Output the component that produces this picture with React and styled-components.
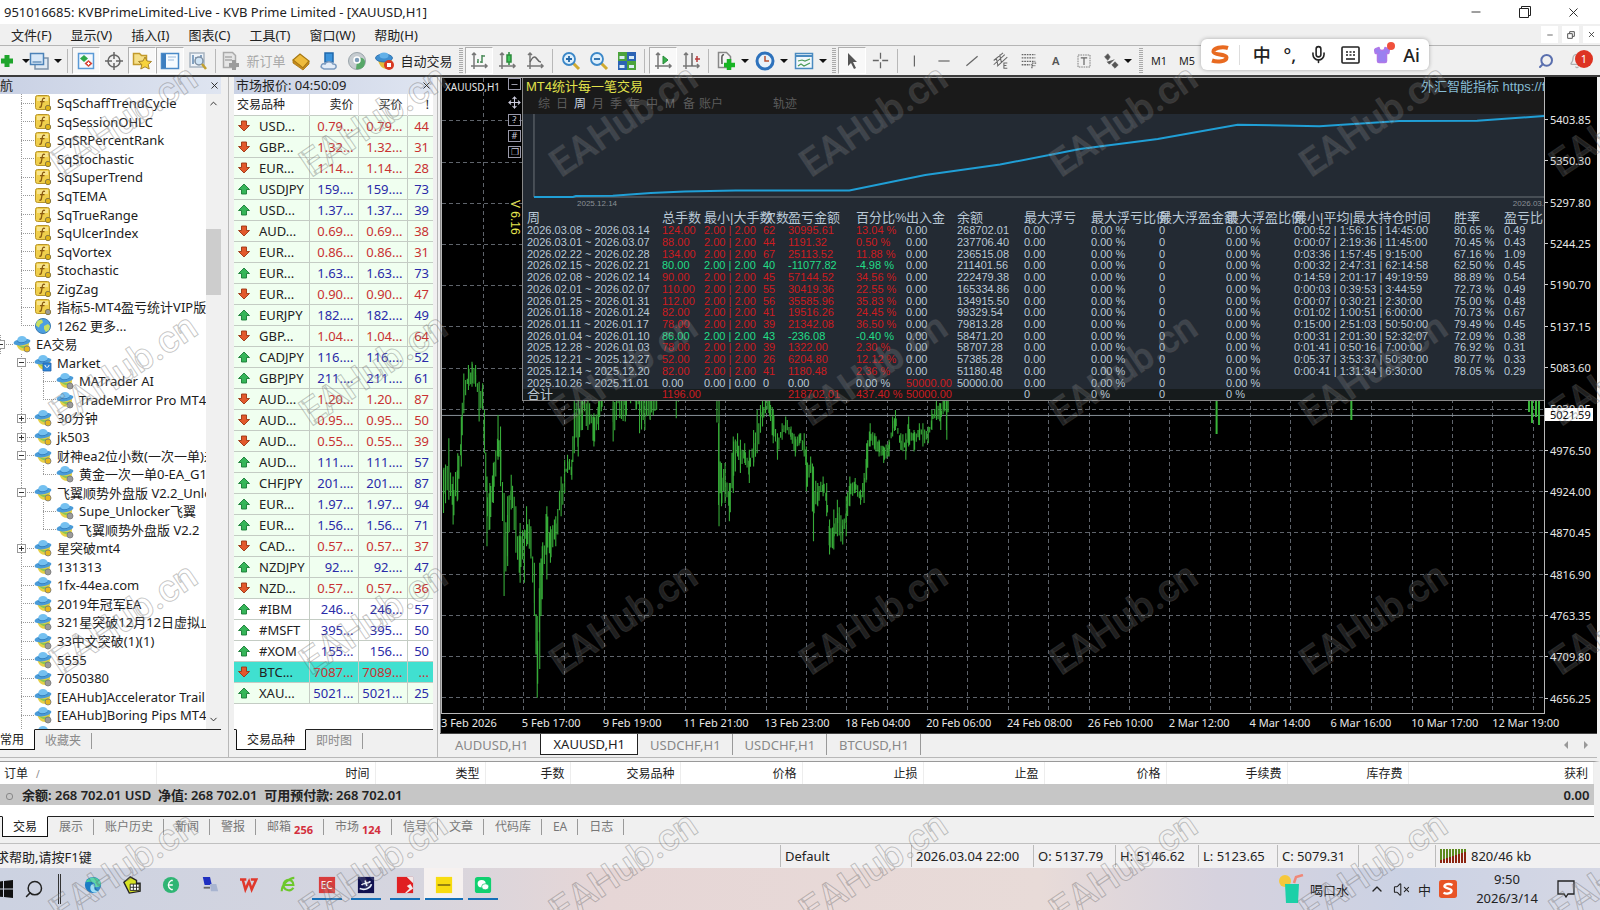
import React from "react";
import styled, { createGlobalStyle, css } from "styled-components";
import { Bell, Mic, Search, Minus, X, VolumeX, ChevronUp, ChevronDown, Shirt, Move } from "lucide-react";

const GlobalStyle = createGlobalStyle`
	* {
		box-sizing: border-box;
	}
	body {
		margin: 0;
		overflow: hidden;
		font-family: "Noto Sans", "Noto Sans CJK SC", sans-serif;
		font-size: 13px;
		color: #222;
		background: #f0f0f0;
	}
	button {
		margin: 0;
		padding: 0;
		border: 0;
		background: none;
		font: inherit;
		color: inherit;
		white-space: nowrap;
	}
	table {
		border-collapse: collapse;
	}
	svg {
		display: block;
		flex-shrink: 0;
	}
`;

/* ---------- data ---------- */

const menus = ["文件(F)", "显示(V)", "插入(I)", "图表(C)", "工具(T)", "窗口(W)", "帮助(H)"];

// [level, icon, label, expander, last child]
const tree = [
	[1, "fx", "SqSchaffTrendCycle"],
	[1, "fx", "SqSessionOHLC"],
	[1, "fx", "SqSRPercentRank"],
	[1, "fx", "SqStochastic"],
	[1, "fx", "SqSuperTrend"],
	[1, "fx", "SqTEMA"],
	[1, "fx", "SqTrueRange"],
	[1, "fx", "SqUlcerIndex"],
	[1, "fx", "SqVortex"],
	[1, "fx", "Stochastic"],
	[1, "fx", "ZigZag"],
	[1, "fxGray", "指标5-MT4盈亏统计VIP版"],
	[1, "globe", "1262 更多...", "", true],
	[0, "ea", "EA交易", "-"],
	[1, "market", "Market", "-"],
	[2, "eaGray", "MATrader AI"],
	[2, "eaGray", "TradeMirror Pro MT4", "", true],
	[1, "ea", "30分钟", "+"],
	[1, "ea", "jk503", "+"],
	[1, "ea", "财神ea2位小数(一次一单)未", "-"],
	[2, "eaGray", "黄金一次一单0-EA_G1", "", true],
	[1, "ea", "飞翼顺势外盘版 V2.2_Unlocker", "-"],
	[2, "eaGray", "Supe_Unlocker飞翼"],
	[2, "eaGray", "飞翼顺势外盘版 V2.2", "", true],
	[1, "ea", "星突破mt4", "+"],
	[1, "eaGray", "131313"],
	[1, "ea", "1fx-44ea.com"],
	[1, "ea", "2019年冠军EA"],
	[1, "eaGray", "321星突破12月12日虚拟止损"],
	[1, "eaGray", "33中文突破(1)(1)"],
	[1, "eaGray", "5555"],
	[1, "eaGray", "7050380"],
	[1, "ea", "[EAHub]Accelerator Trail"],
	[1, "eaGray", "[EAHub]Boring Pips MT4"],
	[1, "ea", "[EAHub]Breakthrough"],
];

// symbol, bid, ask, spread, direction, background
const quotes = [
	["USD...", "0.79...", "0.79...", "44", 0],
	["GBP...", "1.32...", "1.32...", "31", 0],
	["EUR...", "1.14...", "1.14...", "28", 0],
	["USDJPY", "159....", "159....", "73", 1],
	["USD...", "1.37...", "1.37...", "39", 1],
	["AUD...", "0.69...", "0.69...", "38", 0],
	["EUR...", "0.86...", "0.86...", "31", 0],
	["EUR...", "1.63...", "1.63...", "73", 1],
	["EUR...", "0.90...", "0.90...", "47", 0],
	["EURJPY", "182....", "182....", "49", 1],
	["GBP...", "1.04...", "1.04...", "64", 0],
	["CADJPY", "116....", "116....", "52", 1],
	["GBPJPY", "211....", "211....", "61", 1],
	["AUD...", "1.20...", "1.20...", "87", 0],
	["AUD...", "0.95...", "0.95...", "50", 0],
	["AUD...", "0.55...", "0.55...", "39", 0],
	["AUD...", "111....", "111....", "57", 1],
	["CHFJPY", "201....", "201....", "87", 1],
	["EUR...", "1.97...", "1.97...", "94", 1],
	["EUR...", "1.56...", "1.56...", "71", 1],
	["CAD...", "0.57...", "0.57...", "37", 0],
	["NZDJPY", "92....", "92....", "47", 1],
	["NZD...", "0.57...", "0.57...", "36", 0],
	["#IBM", "246...", "246...", "57", 1, "#ffffff"],
	["#MSFT", "395...", "395...", "50", 1, "#ffffff"],
	["#XOM", "155...", "156...", "50", 1, "#ffffff"],
	["BTC...", "7087...", "7089...", "...", 0, "#40e0d0"],
	["XAU...", "5021...", "5021...", "25", 1],
];

const prices = [
	"5403.85", "5350.30", "5297.80", "5244.25", "5190.70", "5137.15", "5083.60", "5030.05",
	"4976.50", "4924.00", "4870.45", "4816.90", "4763.35", "4709.80", "4656.25",
];

const dates = [
	"3 Feb 2026", "5 Feb 17:00", "9 Feb 19:00", "11 Feb 21:00", "13 Feb 23:00", "18 Feb 04:00", "20 Feb 06:00",
	"24 Feb 08:00", "26 Feb 10:00", "2 Mar 12:00", "4 Mar 14:00", "6 Mar 16:00", "10 Mar 17:00", "12 Mar 19:00",
];

const statCols = [
	["周", 139], ["总手数", 42], ["最小|大手数", 59], ["次数", 25], ["盈亏金额", 68], ["百分比%", 50],
	["出入金", 51], ["余额", 67], ["最大浮亏", 67], ["最大浮亏比例", 68], ["最大浮盈金额", 67],
	["最大浮盈比例", 68], ["最小|平均|最大持仓时间", 160], ["胜率", 50], ["盈亏比", 41],
];

const stats = [
	["2026.03.08 ~ 2026.03.14", "124.00", "62", "30995.61", "13.04 %", "268702.01", "0:00:52 | 1:56:15 | 14:45:00", "80.65 %", "0.49"],
	["2026.03.01 ~ 2026.03.07", "88.00", "44", "1191.32", "0.50 %", "237706.40", "0:00:07 | 2:19:36 | 11:45:00", "70.45 %", "0.43"],
	["2026.02.22 ~ 2026.02.28", "134.00", "67", "25113.52", "11.88 %", "236515.08", "0:03:36 | 1:57:45 | 9:15:00", "67.16 %", "1.09"],
	["2026.02.15 ~ 2026.02.21", "80.00", "40", "-11077.82", "-4.98 %", "211401.56", "0:00:32 | 2:47:31 | 62:14:58", "62.50 %", "0.45"],
	["2026.02.08 ~ 2026.02.14", "90.00", "45", "57144.52", "34.56 %", "222479.38", "0:14:59 | 2:01:17 | 49:19:59", "88.89 %", "0.54"],
	["2026.02.01 ~ 2026.02.07", "110.00", "55", "30419.36", "22.55 %", "165334.86", "0:00:03 | 0:39:53 | 3:44:59", "72.73 %", "0.49"],
	["2026.01.25 ~ 2026.01.31", "112.00", "56", "35585.96", "35.83 %", "134915.50", "0:00:07 | 0:30:21 | 2:30:00", "75.00 %", "0.48"],
	["2026.01.18 ~ 2026.01.24", "82.00", "41", "19516.26", "24.45 %", "99329.54", "0:01:02 | 1:00:51 | 6:00:00", "70.73 %", "0.67"],
	["2026.01.11 ~ 2026.01.17", "78.00", "39", "21342.08", "36.50 %", "79813.28", "0:15:00 | 2:51:03 | 50:50:00", "79.49 %", "0.45"],
	["2026.01.04 ~ 2026.01.10", "86.00", "43", "-236.08", "-0.40 %", "58471.20", "0:00:31 | 2:01:30 | 52:32:07", "72.09 %", "0.38"],
	["2025.12.28 ~ 2026.01.03", "78.00", "39", "1322.00", "2.30 %", "58707.28", "0:01:41 | 0:50:16 | 7:00:00", "76.92 %", "0.31"],
	["2025.12.21 ~ 2025.12.27", "52.00", "26", "6204.80", "12.12 %", "57385.28", "0:05:37 | 3:53:37 | 50:30:00", "80.77 %", "0.33"],
	["2025.12.14 ~ 2025.12.20", "82.00", "41", "1180.48", "2.36 %", "51180.48", "0:00:41 | 1:31:34 | 6:30:00", "78.05 %", "0.29"],
];

// [x, high, low] turning points of the price envelope
const swings = [
	[35, 360, 490], [50, 265, 450], [62, 380, 525], [75, 310, 450], [85, 200, 350], [92, 70, 190], [105, 45, 120],
	[115, 35, 110], [125, 45, 110], [135, 95, 215], [145, 100, 180], [150, 180, 310], [157, 380, 590], [165, 400, 540],
	[175, 340, 460], [188, 195, 330], [195, 230, 410], [205, 430, 740], [215, 440, 650], [225, 375, 480], [238, 470, 610],
	[250, 520, 700], [262, 540, 700], [268, 470, 590], [280, 530, 620], [290, 640, 800], [298, 800, 1046], [305, 640, 960],
	[312, 590, 750], [325, 470, 690], [335, 530, 640], [350, 500, 590], [365, 380, 500], [375, 330, 430], [383, 315, 370],
	[395, 330, 390], [402, 130, 310], [413, 130, 320], [425, 90, 240], [440, 110, 240], [457, 190, 290], [470, 140, 240],
	[480, 60, 170], [505, 60, 140], [511, 100, 275], [520, 80, 210], [545, 100, 215], [560, 60, 160], [575, 60, 180], [585, 100, 250],
	[600, 130, 240], [615, 100, 210], [633, 60, 180], [640, 40, 100], [680, 40, 100], [688, 100, 205], [695, 80, 150],
	[702, 20, 90], [800, 20, 120], [808, 140, 530], [815, 340, 470], [825, 340, 460], [837, 400, 515], [848, 260, 430],
	[860, 250, 320], [868, 270, 370], [880, 280, 340], [893, 300, 400], [905, 240, 350], [915, 180, 310], [930, 150, 230],
	[938, 130, 190], [950, 140, 200], [960, 180, 280], [972, 250, 330], [985, 220, 270], [995, 200, 250], [1010, 230, 270],
	[1022, 260, 320], [1035, 250, 280], [1047, 250, 320], [1053, 290, 425], [1065, 320, 370], [1073, 350, 575],
	[1085, 400, 470], [1100, 380, 440], [1110, 400, 500], [1118, 510, 615], [1130, 480, 600], [1140, 450, 560],
	[1155, 510, 585], [1165, 440, 560], [1175, 380, 470], [1190, 385, 430], [1205, 420, 465], [1215, 370, 460],
	[1222, 280, 390], [1232, 220, 290], [1245, 250, 300], [1257, 270, 320], [1270, 290, 340], [1285, 270, 320],
	[1295, 200, 260], [1303, 180, 240], [1318, 250, 300], [1332, 250, 330], [1340, 200, 290], [1355, 240, 305],
	[1370, 220, 270], [1380, 220, 290], [1395, 230, 280], [1405, 180, 240], [1418, 150, 210], [1430, 160, 240],
	[1440, 140, 180], [1447, 120, 270], [1454, 60, 150],
];

function priceBars() {
	let d = "";
	let seed = 7;
	let i = 0;
	const rnd = () => {
		seed = (seed * 16807) % 2147483647;
		return seed / 2147483647;
	};
	for (let x = 36; x < 1454; x += 4.7) {
		while (swings[i + 1][0] < x) i++;
		const a = swings[i];
		const b = swings[i + 1];
		const t = (x - a[0]) / (b[0] - a[0]);
		const hi = a[1] + (b[1] - a[1]) * t;
		const lo = a[2] + (b[2] - a[2]) * t;
		const span = lo - hi;
		d += `M${x.toFixed(1)} ${(hi + span * rnd() * 0.45).toFixed(0)}V${(lo - span * rnd() * 0.45).toFixed(0)}`;
	}
	// the extremes themselves are always drawn full height
	swings.forEach(([x, hi, lo]) => {
		d += `M${x} ${hi}V${lo}`;
	});
	return d;
}
const BARS = priceBars();

const terminalCols = [
	["订单", 156], ["时间", 219], ["类型", 110], ["手数", 85], ["交易品种", 110], ["价格", 122], ["止损", 121],
	["止盈", 121], ["价格", 122], ["手续费", 121], ["库存费", 121], ["获利", 0],
];

const terminalTabs = [
	["交易"], ["展示"], ["账户历史"], ["新闻"], ["警报"], ["邮箱", "256"], ["市场", "124"], ["信号"], ["文章"],
	["代码库"], ["EA"], ["日志"],
];

/* ---------- small drawings ---------- */

const HatIcon = ({ dot = "#e8b820", box }) => (
	<svg width="18" height="18" viewBox="0 0 18 18">
		<path d="M3 8c1 5 4 8 8 8 4 0 5-4 5-8z" fill="#e6d048" />
		<path d="M4 9c2 2 6 3 11 1l-2 3c-3 1-7-1-9-4z" fill="#8cc850" />
		<ellipse cx="9" cy="7" rx="8.5" ry="3.2" fill="#4a9bd8" transform="rotate(-8 9 7)" />
		<ellipse cx="9" cy="4.6" rx="4.6" ry="3.6" fill="#74c0f0" />
		<path d="M4.5 6.500c3 2 6 1.600 9-.4" stroke="#2c78b8" fill="none" />
		{box ? (
			<path d="M9 9h8v8H9z" fill="#2f86d8" stroke="#1f5fa8" strokeWidth=".8" />
		) : (
			<circle cx="14" cy="14" r="3" fill={dot} stroke="#777" strokeWidth=".8" />
		)}
		{box && <path d="M11 11c0 3 4 3 4 0" stroke="#fff" fill="none" />}
	</svg>
);

const FxIcon = ({ dot = "#e0b418" }) => (
	<svg width="18" height="18" viewBox="0 0 18 18">
		<rect x="1.5" y="1.5" width="14" height="14" rx="2" fill="#f0cf4c" stroke="#b8952a" />
		<path d="M3 3h11v4H3z" fill="#f8e48c" />
		<path d="M11 4.5c-2-.8-2.500.5-2.700 2L7.300 12c-.3 1.200-1 1.500-2 1M6 7.700h4.500" stroke="#8a5a10" strokeWidth="1.3" fill="none" />
		<circle cx="14" cy="14" r="2.7" fill={dot} stroke="#8a7a40" />
	</svg>
);

const GlobeIcon = () => (
	<svg width="18" height="18" viewBox="0 0 18 18">
		<circle cx="9" cy="9" r="7.5" fill="#4c9fe0" stroke="#3a7ab0" />
		<path d="M4 3.5l4-1 1 3-3 2-1 3-3-2c0-2 .5-4 2-5zM10 9l4-2 2 2-1 4-3 2-2-3z" fill="#c8e060" />
	</svg>
);

const NODE_ICONS = {
	fx: <FxIcon />,
	fxGray: <FxIcon dot="#999" />,
	globe: <GlobeIcon />,
	ea: <HatIcon />,
	eaGray: <HatIcon dot="#9a9a9a" />,
	market: <HatIcon box />,
};

const ArrowIcon = ({ up }) => (
	<svg width="12" height="12" viewBox="0 0 12 12">
		<path
			d="M6 1l5.500 5.500H8.500V11h-5V6.500H.5z"
			fill={up ? "#35b558" : "#e2592c"}
			stroke={up ? "#187a35" : "#9c3412"}
			strokeWidth=".9"
			strokeLinejoin="round"
			transform={up ? undefined : "rotate(180 6 6)"}
		/>
	</svg>
);

const Glyph = ({ children, size = 20 }) => (
	<svg width={size} height={size} viewBox="0 0 20 20" fill="none" stroke="#666" strokeWidth="1.5">
		{children}
	</svg>
);

const axes = <path d="M5 2v16M2 15h16M3 4l2-2 2 2M16 13l2 2-2 2" stroke="#777" />;

const ICONS = {
	add: <path d="M10 4v12M4 10h12" stroke="#1fa52c" strokeWidth="5" />,
	windows: (
		<>
			<path d="M6 7h13v11H6z" fill="#dfe9f3" stroke="#7d93aa" />
			<path d="M1.500 2.500h13v11h-13z" fill="#d8e8f8" stroke="#4c82b8" />
			<path d="M3.500 11h9" stroke="#6a94be" />
		</>
	),
	market: (
		<>
			<path d="M2.500 2.500h15v15h-15z" fill="#f3f9ff" stroke="#5b9ad6" />
			<path d="M8 4l4 3.500-4 3.500-4-3.500z" fill="#2ea84a" stroke="none" />
			<path d="M12.500 9l4 3.500-4 3.500-4-3.500z" fill="#d84a3a" stroke="none" />
			<path d="M12.500 11v3M11 12.500h3" stroke="#fff" strokeWidth="1" />
		</>
	),
	cross: (
		<>
			<circle cx="10" cy="10" r="6" />
			<path d="M10 1v7M10 12v7M1 10h7M12 10h7" />
		</>
	),
	star: (
		<>
			<path d="M1.500 2.500h6l2 2h5v9h-13z" fill="#f5df88" stroke="#c29a2c" />
			<path d="M13 6l2 4 4.500.5-3.300 3 1 4.500-4.200-2.200L8.800 18l1-4.500-3.300-3L11 10z" fill="#f7d33c" stroke="#a8842a" strokeWidth="1" />
		</>
	),
	terminal: (
		<>
			<path d="M1.500 2.500h17v15h-17z" fill="#f6fbff" stroke="#4a8ac8" />
			<path d="M2 3h4v14H2z" fill="#3d7fc0" stroke="none" />
			<path d="M8 6h8M8 9h6" stroke="#b8d0e8" />
		</>
	),
	tester: (
		<>
			<path d="M2 2h14v14H2z" fill="#eef3f8" stroke="#a8b4c0" />
			<path d="M5 4v9M8 6v5M13 4v3" stroke="#6088b0" />
			<circle cx="11" cy="10" r="4" fill="#cfe4f5" stroke="#7d8fa2" />
			<path d="M14 13l4 5" stroke="#c2a030" strokeWidth="2.5" />
		</>
	),
	order: (
		<>
			<path d="M2.500 1.500h9l3 3v12h-12z" fill="#e6e6e6" stroke="#aaa" />
			<path d="M4 6h7M4 9h7" stroke="#aaa" />
			<path d="M13 9v10M8 14h10" stroke="#9c9c9c" strokeWidth="4" />
		</>
	),
	book: (
		<>
			<path d="M2 9l7-6 9 7-6 7z" fill="#eebb3c" stroke="#a67812" strokeWidth="1.2" />
			<path d="M2 9v3l10 7 6-6v-3l-6 7z" fill="#c88a1c" stroke="#a67812" strokeWidth=".8" />
		</>
	),
	person: (
		<>
			<path d="M6 2h8v9H6z" fill="#3c94dc" stroke="#1f68ac" />
			<path d="M3 17c-2-2 0-5 3-4 1-3 7-3 8 0 4 0 4 4 1 5H5z" fill="#e4edf8" stroke="#7d9cc0" />
		</>
	),
	signal: (
		<>
			<circle cx="10" cy="10" r="8.500" fill="#c6ccd0" stroke="#9aa4aa" strokeWidth="1" />
			<path d="M10 10l-1 8c5 1 9-2 9-7 0-3-3-5-6-4z" fill="#58a868" stroke="none" />
			<circle cx="10" cy="9" r="3" fill="#7d9cb8" stroke="#fff" />
		</>
	),
	auto: (
		<>
			<path d="M3 9c1 5 4 9 9 9l5-9z" fill="#e3bc38" stroke="none" />
			<ellipse cx="9" cy="7" rx="8.500" ry="4" fill="#3f8fd0" stroke="#1f66a8" strokeWidth=".8" />
			<ellipse cx="9" cy="4.500" rx="4.500" ry="3" fill="#62b0e8" stroke="none" />
			<circle cx="14" cy="14" r="5" fill="#d83a22" stroke="none" />
			<path d="M12 12h4v4h-4z" fill="#fff" stroke="none" />
		</>
	),
	bars: <>{axes}<path d="M9 12V8M9 11h-1M13 4v8M11 11h2M13 5h3" stroke="#4a8a58" /></>,
	candles: <>{axes}<path d="M12 1v13" stroke="#2b8a3b" /><path d="M10 4h4v7h-4z" fill="#3cc858" stroke="#2b8a3b" /></>,
	line: <>{axes}<path d="M5 11c3-6 5-6 7-3s3 3 4 3" /></>,
	zoomIn: (
		<>
			<path d="M12 12l6 6" stroke="#d0aa30" strokeWidth="3" />
			<circle cx="8" cy="8" r="6" fill="#dff0fc" stroke="#3c88c8" strokeWidth="1.8" />
			<path d="M8 5v6M5 8h6" stroke="#2468a8" strokeWidth="1.8" />
		</>
	),
	zoomOut: (
		<>
			<path d="M12 12l6 6" stroke="#d0aa30" strokeWidth="3" />
			<circle cx="8" cy="8" r="6" fill="#dff0fc" stroke="#3c88c8" strokeWidth="1.8" />
			<path d="M5 8h6" stroke="#2468a8" strokeWidth="1.8" />
		</>
	),
	tiles: (
		<>
			<path d="M1 1h9v9H1zM10 10h9v9h-9z" fill="#4ba33c" stroke="none" />
			<path d="M10 1h9v9h-9zM1 10h9v9H1z" fill="#2b63b4" stroke="none" />
			<path d="M2.500 5h5v3h-5zM12 5h5v3h-5zM2.500 14h5v3h-5zM12 14h5v3h-5z" fill="#d9edf5" stroke="none" />
		</>
	),
	scroll: <>{axes}<path d="M10 5l5 4-5 4z" fill="#36b04a" stroke="#2b8a3b" strokeWidth="1" /></>,
	shift: <>{axes}<path d="M11 2v13" /><path d="M19 8h-5M16 5v6" stroke="#b83a3a" /></>,
	indicator: (
		<>
			<path d="M2.500 1.500h8l4 4v11h-12z" fill="#f4f4f4" stroke="#888" />
			<path d="M8 4c-3-1-2 4-2 9" stroke="#555" />
			<path d="M13 8v11M8 14h11" stroke="#18b424" strokeWidth="4.5" />
		</>
	),
	clock: (
		<>
			<circle cx="10" cy="10" r="8" fill="#e8f2fa" stroke="#2e72bc" strokeWidth="3" />
			<path d="M10 5v5h4" stroke="#b85030" />
		</>
	),
	template: (
		<>
			<path d="M1.500 2.500h17v15h-17z" fill="#f2f8fc" stroke="#4a8ac0" />
			<path d="M2 5h16" stroke="#4a8ac0" strokeWidth="2" />
			<path d="M4 10l4-1 3 1 5-2M4 15l3-2 3 2 6-3" stroke="#4a9a58" strokeWidth="1.2" />
		</>
	),
	cursor: <path d="M6 2v13l3-3 3 6 2-1-3-6h4z" fill="#555" stroke="none" />,
	crosshair: <path d="M10 1v7M10 12v7M1 10h7M12 10h7" />,
	vline: <path d="M8 3v14" />,
	hline: <path d="M3 10h14" />,
	trend: <path d="M3 16L17 4" />,
	channel: <path d="M2 15L15 3M2 10l11-9M6 17L18 6M5 7l2 9M9 3l2 9M18 13h-4v6h4M14 16h3" strokeWidth="1.2" />,
	fibo: <path d="M2 3h16M2 7h16M2 11h16M2 15h10M14 19v-6h5M14 16h4" strokeDasharray="2 1" />,
	textA: <text x="5" y="15" fontSize="14" fill="#555" stroke="none" fontWeight="600">A</text>,
	label: (
		<>
			<path d="M2.500 2.500h15v15h-15z" strokeDasharray="2 1" strokeWidth="1" />
			<path d="M6 6h8M10 6v9" />
		</>
	),
	shapes: <path d="M2 5l4-4 3 4-3 4zM11 15l4-4 4 4-4 4zM5 11l3 3 6-6" fill="#555" strokeWidth="1" />,
};

/* ---------- styled parts ---------- */

const Desktop = styled.div`
	position: relative;
	display: flex;
	flex-direction: column;
	min-height: 100vh;
	overflow: hidden;
`;

const TitleBar = styled.header`
	display: flex;
	align-items: center;
	justify-content: space-between;
	height: 24px;
	padding: 0 18px 0 4px;
	background: #fff;
	h1 {
		margin: 0;
		font-size: 13px;
		font-weight: 400;
	}
`;

const WindowButtons = styled.div`
	display: flex;
	align-items: center;
	gap: ${(p) => (p.$small ? "4px" : "32px")};
	button {
		display: grid;
		place-items: center;
		width: 17px;
		height: 17px;
		background: #fff;
	}
`;

const MenuBar = styled.nav`
	display: flex;
	align-items: center;
	justify-content: space-between;
	height: 22px;
	padding-left: 11px;
	border-bottom: 1px solid #b5b5b5;
	background: #f0f0f0;
	ul {
		display: flex;
		gap: 19px;
		margin: 0;
		padding: 0;
		list-style: none;
	}
`;

const Toolbar = styled.div`
	display: flex;
	align-items: center;
	height: 31px;
	border-bottom: 2px solid #3c3c3c;
	background: #f0f0f0;
`;

const Tool = styled.button`
	display: flex;
	align-items: center;
	justify-content: center;
	flex-shrink: 0;
	gap: 5px;
	width: ${(p) => p.$w || 28}px;
	height: 27px;
	color: ${(p) => (p.$muted ? "#a8a8a8" : "#222")};
	${(p) =>
		p.$pressed &&
		css`
			border: 1px solid #b0b0b0;
			border-right-color: #fff;
			border-bottom-color: #fff;
			background: #f8f8f8;
		`}
`;

const Caret = styled.span`
	border: 4px solid transparent;
	border-top-color: #111;
	border-bottom: 0;
`;

const Sep = styled.span`
	flex-shrink: 0;
	width: 1px;
	height: 24px;
	margin: 0 4px 0 3px;
	background: #b8b8b8;
`;

const Grip = styled.span`
	flex-shrink: 0;
	width: 4px;
	height: 26px;
	margin: 0 2px;
	background: repeating-linear-gradient(#aaa 0 1px, #f0f0f0 1px 2px);
`;

const ToolEnd = styled.div`
	display: flex;
	align-items: center;
	gap: 15px;
	margin-left: auto;
	padding-right: 7px;
`;

// magnifier with its handle at the lower left
const Magnifier = styled(Search)`
	transform: scaleX(-1);
`;

const Alerts = styled.button`
	display: flex;
	align-items: center;
	svg {
		margin-right: -10px;
	}
	span {
		z-index: 1;
		display: grid;
		place-items: center;
		width: 18px;
		height: 18px;
		margin-bottom: 4px;
		border-radius: 50%;
		background: #dd3322;
		color: #fff;
		font-size: 11px;
	}
`;

const Workspace = styled.main`
	display: flex;
	flex: 1;
	min-height: 0;
	padding-right: 3px;
`;

const Panel = styled.section`
	display: flex;
	flex-direction: column;
	flex-shrink: 0;
	width: ${(p) => p.$w}px;
	padding: 0 ${(p) => p.$pr}px 7px ${(p) => p.$pl || 0}px;
	border-right: 1px solid #b8b8b8;
	border-bottom: 1px solid #b8b8b8;
`;

const PanelHead = styled.header`
	display: flex;
	align-items: center;
	justify-content: space-between;
	height: 17px;
	padding: 0 1px 0 ${(p) => p.$pl}px;
	background: linear-gradient(90deg, #c9d1e4, #dfe5f1);
	h2 {
		margin: 0;
		font-size: 13px;
		font-weight: 400;
		line-height: 17px;
	}
`;

const TreeWrap = styled.div`
	display: flex;
	flex: 1 1 0;
	min-height: 0;
	overflow: hidden;
	background: #fff;
`;

const Tree = styled.ul`
	display: grid;
	grid-auto-rows: 1fr;
	flex: 1;
	min-width: 0;
	margin: 0 0 -14px;
	padding: 0;
	list-style: none;
	overflow: hidden;
`;

const Node = styled.li`
	display: flex;
	align-items: center;
	min-height: 0;
	padding-left: ${(p) => (p.$level ? 21 : 0)}px;
	line-height: 18px;
	white-space: nowrap;
	color: #1c1c1c;
	span {
		padding-left: 5px;
	}
`;

const Trunk = styled.i`
	align-self: stretch;
	width: 22px;
	border-left: 1px dotted #999;
`;

const Branch = styled.i`
	display: flex;
	align-items: center;
	align-self: stretch;
	flex-shrink: 0;
	width: 13px;
	background:
		repeating-linear-gradient(90deg, #999 0 1px, transparent 1px 2px) 0 50% / 100% 1px no-repeat,
		repeating-linear-gradient(#999 0 1px, transparent 1px 2px) 0 0 / 1px ${(p) => (p.$end ? "50%" : "100%")} no-repeat;
`;

const Expander = styled.button`
	width: 9px;
	height: 9px;
	margin-left: -4px;
	border: 1px solid #999;
	background:
		linear-gradient(#333, #333) 50% 50% / 5px 1px no-repeat,
		linear-gradient(#333, #333) 50% 50% / 1px ${(p) => (p.$open ? 0 : 5)}px no-repeat,
		#fff;
`;

const ScrollTrack = styled.div`
	display: flex;
	flex-direction: column;
	align-items: center;
	width: 15px;
	padding: 4px 0;
	background: #f0f0f0;
	&::before {
		content: "";
		order: 1;
		width: 15px;
		height: 66px;
		margin: 120px 0 auto;
		background: #cdcdcd;
	}
	svg:last-child {
		order: 2;
	}
`;

const PanelTabs = styled.div`
	display: flex;
	height: 21px;
	border-top: 1px solid #222;
	padding-left: ${(p) => p.$pl || 0}px;
	color: #8a8a8a;
	button {
		display: flex;
		align-items: center;
		padding: 0 10px;
		font-size: 12px;
		line-height: 18px;
	}
	button + button {
		height: 16px;
		margin-top: 3px;
		border-right: 1px solid #999;
	}
	button:first-child {
		margin-top: -1px;
		padding-left: ${(p) => (p.$pl ? 10 : 0)}px;
		border: 1px solid #111;
		border-left-width: ${(p) => (p.$pl ? 1 : 0)}px;
		border-top-color: #fff;
		background: #fff;
		color: #222;
	}
`;

const QuoteArea = styled.div`
	flex: 1 1 0;
	min-height: 0;
	overflow: hidden;
	background: #fff;
`;

const QuoteTable = styled.table`
	width: 100%;
	table-layout: fixed;
	th {
		height: 21px;
		padding: 0 4px 0 3px;
		font-weight: 400;
		font-size: 12px;
		text-align: right;
		border-right: 1px solid #e0e0e0;
	}
	th:first-child {
		text-align: left;
	}
	td {
		height: 21px;
		padding: 0 4px 0 0;
		border: 1px solid #c4ccc4;
		border-left: 0;
		line-height: 18px;
		text-align: right;
		white-space: nowrap;
		overflow: hidden;
	}
	th:last-child,
	td:last-child {
		border-right: 0;
	}
`;

const QuoteRow = styled.tr`
	background: ${(p) => p.$bg || "#f0fff0"};
	color: ${(p) => (p.$up ? "#2a2aa8" : "#c83232")};
`;

const Symbol = styled.div`
	display: flex;
	align-items: center;
	gap: 9px;
	padding-left: 4px;
	color: #222;
`;

const ChartColumn = styled.section`
	display: flex;
	flex: 1;
	flex-direction: column;
	min-width: 0;
	padding-left: 2px;
	border-bottom: 1px solid #b8b8b8;
`;

const ChartWindow = styled.div`
	display: grid;
	grid-template: minmax(0, 1fr) 19px / minmax(0, 1fr) 52px;
	flex: 1;
	min-height: 0;
	border-left: 1px solid #888;
	background: #000;
	color: #e8e8e8;
	font-size: 11px;
`;

const Plot = styled.div`
	position: relative;
	min-height: 0;
	border: 1px solid #b8b8b8;
	> svg {
		position: absolute;
		inset: 0;
		width: 100%;
		height: 100%;
	}
`;

const PlotTitle = styled.h3`
	position: absolute;
	top: 2px;
	left: 3px;
	margin: 0;
	font-size: 10px;
	font-weight: 400;
`;

const PlotButtons = styled.div`
	position: absolute;
	top: 0;
	left: 66px;
	display: flex;
	flex-direction: column;
	gap: 4px;
	button {
		display: grid;
		place-items: center;
		width: 13px;
		height: 12px;
		border: 1px solid #99a;
		font-size: 9px;
		line-height: 10px;
		color: #ccd;
	}
	button:nth-child(2) {
		height: 16px;
		border: 0;
	}
`;

const Version = styled.span`
	position: absolute;
	top: 122px;
	left: 66px;
	writing-mode: vertical-rl;
	font-family: "Liberation Sans", sans-serif;
	font-size: 12px;
	line-height: 14px;
	color: #e6e650;
`;

const PriceAxis = styled.ol`
	position: relative;
	display: flex;
	flex-direction: column;
	justify-content: space-between;
	margin: 0;
	padding: 37px 0 9px;
	list-style: none;
	line-height: 12px;
	li::before {
		content: "";
		display: inline-block;
		width: 3px;
		height: 1px;
		margin-right: 2px;
		vertical-align: 4px;
		background: #ccc;
	}
`;

const LastPrice = styled.strong`
	position: absolute;
	top: 52%;
	left: 0;
	padding: 0 2px 0 5px;
	background: #fff;
	color: #000;
	font-weight: 400;
	line-height: 13px;
`;

const TimeAxis = styled.ol`
	display: grid;
	grid-column: 1 / 3;
	grid-template-columns: repeat(14, 1fr);
	margin: 0;
	padding: 0 24px 0 0;
	list-style: none;
	line-height: 18px;
	white-space: nowrap;
`;

const ChartTabs = styled.div`
	display: flex;
	align-items: flex-start;
	height: 24px;
	padding: 0 8px 0 3px;
	border-top: 1px solid #444;
	color: #888;
	svg {
		margin: 6px 0 0 auto;
	}
`;

const ChartTab = styled.button`
	height: 21px;
	padding: 0 12px;
	border: 0 solid #222;
	border-width: ${(p) => (p.$active ? "0 1px 1px" : "0")};
	background: ${(p) => (p.$active ? "#fff" : "none")};
	color: ${(p) => (p.$active ? "#222" : "#888")};
	${(p) => p.$line && "box-shadow: inset -1px 0 #999;"}
`;

const StatsPanel = styled.div`
	position: absolute;
	top: 0;
	right: 0;
	left: 80px;
	height: 323px;
	display: flex;
	flex-direction: column;
	overflow: hidden;
	border: 1px solid #888;
	border-width: 0 0 1px 1px;
	background: #232a33;
	font-family: "Liberation Sans", "Noto Sans CJK SC", sans-serif;
	color: #b9c8d6;
`;

const StatsHead = styled.header`
	height: 36px;
	padding-left: 3px;
	background: #1a1a1a;
	font-size: 13px;
	line-height: 17px;
	> div {
		display: flex;
		justify-content: space-between;
		overflow: hidden;
		white-space: nowrap;
	}
	strong {
		font-weight: 400;
		color: #e2e24a;
	}
	a {
		width: 123px;
		color: #86bcd4;
		text-decoration: none;
	}
`;

const Periods = styled.nav`
	display: flex;
	padding-left: 9px;
	color: #5c5c5c;
	font-size: 12px;
	button {
		min-width: 18px;
		line-height: 19px;
	}
	button:nth-child(3) {
		color: #ccd6e0;
	}
	button:nth-child(9),
	button:nth-child(10) {
		min-width: 20px;
	}
	button:last-child {
		margin-left: 50px;
	}
`;

const Equity = styled.div`
	height: 96px;
	svg {
		width: 100%;
		height: 84px;
	}
	div {
		display: flex;
		justify-content: space-between;
		padding-left: 54px;
		font-size: 8px;
		line-height: 12px;
		color: #8a9096;
	}
`;

const StatsTable = styled.table`
	table-layout: fixed;
	width: 100%;
	height: 190px;
	font-size: 11px;
	line-height: 11px;
	white-space: nowrap;
	th {
		height: 15px;
		padding: 0;
		font-size: 13px;
		font-weight: 400;
		line-height: 13px;
		text-align: left;
	}
	th:first-child,
	td:first-child {
		padding-left: 4px;
	}
	td {
		padding: 0;
	}
	tfoot {
		background: #161b1c;
		td:first-child {
			font-size: 13px;
		}
	}
`;

const Money = styled.td`
	color: ${(p) => (p.$v.startsWith("-") ? "#22dd88" : "#cc1c20")};
`;

const Terminal = styled.section`
	margin-top: 3px;
	border-top: 1px solid #999;
	background: #fff;
	border-right: 6px solid #f0f0f0;
`;

const TerminalTable = styled.table`
	width: 100%;
	table-layout: fixed;
	th {
		height: 22px;
		padding: 0 5px;
		border-right: 1px solid #ededed;
		font-size: 12px;
		font-weight: 400;
		text-align: right;
	}
	th:first-child {
		padding-left: 4px;
		text-align: left;
	}
	th small {
		padding-left: 8px;
		color: #888;
	}
	td {
		height: 21px;
		padding: 0 4px;
		background: #c6c6c6;
		font-weight: 600;
		line-height: 16px;
		text-align: right;
	}
	td:first-child {
		text-align: left;
	}
	td i {
		display: inline-block;
		width: 7px;
		height: 7px;
		margin: 0 9px 0 2px;
		border: 1px solid #888;
		border-radius: 3px;
	}
`;

const TerminalTabs = styled.div`
	display: flex;
	height: 27px;
	margin-top: 11px;
	padding-left: 2px;
	border-top: 1px solid #222;
	background: #f0f0f0;
	color: #777;
	font-size: 12px;
	button {
		height: 16px;
		margin-top: 2px;
		padding: 0 10px 0 11px;
		border-right: 1px solid #999;
		line-height: 16px;
	}
	button:first-child {
		height: 21px;
		margin-top: -1px;
		padding: 0 10px;
		border: 1px solid #111;
		border-top-color: #fff;
		background: #fff;
		color: #222;
	}
	sub {
		padding-left: 3px;
		font-size: 11px;
		font-weight: 700;
		line-height: 1px;
		color: #d32f3c;
	}
`;

const StatusBar = styled.footer`
	display: flex;
	align-items: center;
	height: 25px;
	border-top: 1px solid #c0c0c0;
	padding-right: 32px;
	background: #f1f0f1;
`;

const StatusCell = styled.div`
	display: flex;
	align-items: center;
	gap: 4px;
	flex: ${(p) => (p.$w ? `0 0 ${p.$w}px` : "1")};
	height: 22px;
	padding-left: 4px;
	border-left: 1px solid #bbb;
	white-space: nowrap;
	&:first-child {
		border: 0;
		padding: 0;
	}
	span {
		margin-left: -4px;
	}
`;

const Taskbar = styled.footer`
	display: flex;
	height: 42px;
	padding-right: 25px;
	background: linear-gradient(90deg, #ccd2e1, #d5d5df 25%, #e6d6d6 38%, #e8dbd8 65%, #d6d2de 76%, #cbd2e4 88%, #d5d7e4);
`;

const TaskIcons = styled.div`
	display: flex;
	align-items: center;
	margin-right: auto;
`;

const StartButton = styled.button`
	width: 20px;
	margin: 0 9px 0 -5px;
`;

const TaskDivider = styled.span`
	width: 3px;
	height: 30px;
	margin: 0 12px 0 14px;
	border: 1px solid #333;
	border-width: 0 1px;
`;

const TaskButton = styled.button`
	display: flex;
	flex-direction: column;
	align-items: center;
	align-self: flex-start;
	justify-content: space-between;
	width: 39px;
	height: 32px;
	padding-top: 8px;
	background: ${(p) => (p.$active ? "#f6f1f0" : "none")};
	&::after {
		content: "";
		width: ${(p) => (p.$active ? 38 : 30)}px;
		height: 2px;
		background: ${(p) => (p.$running ? "#1670b8" : "transparent")};
	}
`;

const Tray = styled.div`
	display: flex;
	align-items: center;
	gap: 8px;
	time {
		width: 84px;
		line-height: 19px;
		text-align: center;
	}
`;

const Weather = styled.button`
	display: flex;
	align-items: center;
	gap: 5px;
	margin-right: 12px;
`;

const ImeBar = styled.div`
	position: absolute;
	top: 39px;
	right: 171px;
	display: flex;
	align-items: center;
	justify-content: space-between;
	width: 228px;
	height: 31px;
	padding: 0 9px;
	border-radius: 6px;
	background: #fff;
	box-shadow: 0 0 4px rgba(0, 0, 0, 0.3);
	color: #222;
	button {
		position: relative;
		display: grid;
		place-items: center;
		font-size: 18px;
		font-weight: 500;
		line-height: 24px;
	}
	button:first-child {
		padding-right: 9px;
		border-right: 1px solid #ddd;
	}
`;

const Dot = styled.i`
	position: absolute;
	top: -4px;
	right: -4px;
	width: 8px;
	height: 8px;
	border-radius: 50%;
	background: #f0503c;
`;

const Watermark = styled.svg`
	position: absolute;
	inset: 0;
	width: 100%;
	height: 100%;
	pointer-events: none;
`;

/* ---------- sections ---------- */

const ToolIcon = ({ name, label, children, size, ...rest }) => (
	<Tool aria-label={label || name} {...rest}>
		<Glyph size={size}>{ICONS[name]}</Glyph>
		{children}
	</Tool>
);

function Tools() {
	return (
		<Toolbar>
			<ToolIcon name="add" $w={26}><Caret /></ToolIcon>
			<ToolIcon name="windows" $w={38}><Caret /></ToolIcon>
			<Sep />
			<ToolIcon name="market" $pressed />
			<ToolIcon name="cross" />
			<ToolIcon name="star" $pressed />
			<ToolIcon name="terminal" $pressed />
			<ToolIcon name="tester" />
			<Sep />
			<ToolIcon name="order" $w={67} $muted><span>新订单</span></ToolIcon>
			<ToolIcon name="book" />
			<ToolIcon name="person" />
			<ToolIcon name="signal" />
			<ToolIcon name="auto" $w={86}><span>自动交易</span></ToolIcon>
			<Grip />
			<ToolIcon name="bars" $pressed />
			<ToolIcon name="candles" />
			<ToolIcon name="line" />
			<Sep />
			<ToolIcon name="zoomIn" />
			<ToolIcon name="zoomOut" />
			<ToolIcon name="tiles" />
			<Sep />
			<ToolIcon name="scroll" $pressed />
			<ToolIcon name="shift" />
			<Sep />
			<ToolIcon name="indicator" $w={39}><Caret /></ToolIcon>
			<ToolIcon name="clock" $w={39}><Caret /></ToolIcon>
			<ToolIcon name="template" $w={39}><Caret /></ToolIcon>
			<Grip />
			<ToolIcon name="cursor" $pressed />
			<ToolIcon name="crosshair" size={17} />
			<Sep />
			<ToolIcon name="vline" size={16} />
			<ToolIcon name="hline" size={16} />
			<ToolIcon name="trend" size={16} />
			<ToolIcon name="channel" size={17} />
			<ToolIcon name="fibo" size={17} />
			<ToolIcon name="textA" size={16} />
			<ToolIcon name="label" size={16} />
			<ToolIcon name="shapes" size={16} $w={39}><Caret /></ToolIcon>
			<Grip />
			<Tool><small>M1</small></Tool>
			<Tool><small>M5</small></Tool>
			<ToolEnd>
				<Magnifier size={16} color="#5a6fae" strokeWidth={3} />
				<Alerts aria-label="消息">
					<Bell size={16} color="#b0b0b0" />
					<span>1</span>
				</Alerts>
			</ToolEnd>
		</Toolbar>
	);
}

function Navigator() {
	return (
		<Panel $w={229} $pr={7}>
			<PanelHead $pl={0}>
				<h2>航</h2>
				<button aria-label="关闭"><X size={11} /></button>
			</PanelHead>
			<TreeWrap>
				<Tree>
					{tree.map(([level, icon, label, box, end]) => (
						<Node key={label} $level={level}>
							{level === 2 && <Trunk />}
							<Branch $end={end}>{box && <Expander $open={box === "-"} aria-label="展开" />}</Branch>
							{NODE_ICONS[icon]}
							<span>{label}</span>
						</Node>
					))}
				</Tree>
				<ScrollTrack>
					<ChevronUp size={11} />
					<ChevronDown size={11} />
				</ScrollTrack>
			</TreeWrap>
			<PanelTabs>
				<button>常用</button>
				<button>收藏夹</button>
			</PanelTabs>
		</Panel>
	);
}

function MarketWatch() {
	return (
		<Panel $w={209} $pr={4} $pl={5}>
			<PanelHead $pl={2}>
				<h2>市场报价: 04:50:09</h2>
				<button aria-label="关闭"><X size={11} /></button>
			</PanelHead>
			<QuoteArea>
				<QuoteTable>
					<colgroup>
						<col />
						<col width="49" />
						<col width="49" />
						<col width="26" />
					</colgroup>
					<thead>
						<tr>
							<th>交易品种</th>
							<th>卖价</th>
							<th>买价</th>
							<th>!</th>
						</tr>
					</thead>
					<tbody>
						{quotes.map(([symbol, bid, ask, spread, up, bg], i) => (
							<QuoteRow key={i} $up={up} $bg={bg}>
								<td>
									<Symbol>
										<ArrowIcon up={up} />
										{symbol}
									</Symbol>
								</td>
								<td>{bid}</td>
								<td>{ask}</td>
								<td>{spread}</td>
							</QuoteRow>
						))}
					</tbody>
				</QuoteTable>
			</QuoteArea>
			<PanelTabs $pl={2}>
				<button>交易品种</button>
				<button>即时图</button>
			</PanelTabs>
		</Panel>
	);
}

function Stats() {
	return (
		<StatsPanel>
			<StatsHead>
				<div>
					<strong>MT4统计每一笔交易</strong>
					<a href="#indicator">外汇智能指标 https://fx</a>
				</div>
				<Periods>
					{["综", "日", "周", "月", "季", "年", "中", "M", "备", "账户", "轨迹"].map((p) => (
						<button key={p}>{p}</button>
					))}
				</Periods>
			</StatsHead>
			<Equity>
				<svg viewBox="0 0 1023 84" preserveAspectRatio="none" fill="none">
					<path d="M11 0V83H1023" stroke="#6c7278" strokeWidth="1" />
					<path
						d="M11 83L50 83 53 82 90 81.700 128 79 162 77.500 213 76.500H327L403 61 478 50.500 558 35 636 25 716 10.700 798 12.300 878 7 956 6.700 1023 2"
						stroke="#209fd6"
						strokeWidth="2"
					/>
				</svg>
				<div>
					<span>2025.12.14</span>
					<span>2026.03.</span>
				</div>
			</Equity>
			<StatsTable>
				<colgroup>
					{statCols.map(([name, w]) => (
						<col key={name} width={w} />
					))}
				</colgroup>
				<thead>
					<tr>
						{statCols.map(([name]) => (
							<th key={name}>{name}</th>
						))}
					</tr>
				</thead>
				<tbody>
					{stats.map(([range, lots, count, profit, pct, balance, hold, win, ratio]) => (
						<tr key={range}>
							<td>{range}</td>
							<Money $v={profit}>{lots}</Money>
							<Money $v={profit}>2.00 | 2.00</Money>
							<Money $v={profit}>{count}</Money>
							<Money $v={profit}>{profit}</Money>
							<Money $v={profit}>{pct}</Money>
							<td>0.00</td>
							<td>{balance}</td>
							<td>0.00</td>
							<td>0.00 %</td>
							<td>0</td>
							<td>0.00 %</td>
							<td>{hold}</td>
							<td>{win}</td>
							<td>{ratio}</td>
						</tr>
					))}
					<tr>
						<td>2025.10.26 ~ 2025.11.01</td>
						<td>0.00</td>
						<td>0.00 | 0.00</td>
						<td>0</td>
						<td>0.00</td>
						<td>0.00 %</td>
						<Money $v="50000">50000.00</Money>
						<td>50000.00</td>
						<td>0.00</td>
						<td>0.00 %</td>
						<td>0</td>
						<td>0.00 %</td>
						<td />
						<td />
						<td />
					</tr>
				</tbody>
				<tfoot>
					<tr>
						<td>合计</td>
						<Money $v="1">1196.00</Money>
						<td />
						<td />
						<Money $v="1">218702.01</Money>
						<Money $v="1">437.40 %</Money>
						<Money $v="1">50000.00</Money>
						<td />
						<td>0</td>
						<td>0 %</td>
						<td>0</td>
						<td>0 %</td>
						<td />
						<td />
						<td />
					</tr>
				</tfoot>
			</StatsTable>
		</StatsPanel>
	);
}

function Chart() {
	const rows = prices.map((_, i) => 43 + i * 41.34);
	const cols = Array.from({ length: 27 }, (_, i) => 41.5 + i * 40.45);
	return (
		<ChartColumn>
			<ChartWindow>
				<Plot>
					<svg viewBox="0 0 1104 637" preserveAspectRatio="none" fill="none">
						<g stroke="#5f646b" strokeDasharray="4 3" shapeRendering="crispEdges">
							{rows.map((y) => <path key={y} d={`M0 ${y}H1104`} />)}
							{cols.map((x) => <path key={x} d={`M${x} 0V637`} />)}
						</g>
						<path d="M0 338.500H1104" stroke="#8a929a" />
						<g transform="translate(-11 273) scale(.3571 .3333)">
							<path d={BARS} stroke="#36ab38" strokeWidth="1.1" vectorEffect="non-scaling-stroke" />
						</g>
						<path d="M776 300V357M911 300V343M1089 300V335M1092 300V346M1096 300V340M1099 300V348" stroke="#39b53a" strokeWidth="2" />
					</svg>
					<PlotTitle>XAUUSD,H1</PlotTitle>
					<PlotButtons>
						<button aria-label="收起"><Minus size={9} /></button>
						<button aria-label="移动"><Move size={13} /></button>
						<button>?</button>
						<button>#</button>
						<button>❐</button>
					</PlotButtons>
					<Version>V 6.16</Version>
					<Stats />
				</Plot>
				<PriceAxis>
					{prices.map((p) => (
						<li key={p}>{p}</li>
					))}
					<LastPrice>5021.59</LastPrice>
				</PriceAxis>
				<TimeAxis>
					{dates.map((d) => (
						<li key={d}>{d}</li>
					))}
				</TimeAxis>
			</ChartWindow>
			<ChartTabs>
				<ChartTab>AUDUSD,H1</ChartTab>
				<ChartTab $active>XAUUSD,H1</ChartTab>
				<ChartTab $line>USDCHF,H1</ChartTab>
				<ChartTab $line>USDCHF,H1</ChartTab>
				<ChartTab $line>BTCUSD,H1</ChartTab>
				<svg width="26" height="10" viewBox="0 0 26 10">
					<path d="M5 1v8L1 5zM21 1v8l4-4z" fill="#999" />
				</svg>
			</ChartTabs>
		</ChartColumn>
	);
}

function TerminalPanel() {
	return (
		<Terminal>
			<TerminalTable>
				<colgroup>
					{terminalCols.map(([, w], i) => (
						<col key={i} width={w || undefined} />
					))}
				</colgroup>
				<thead>
					<tr>
						{terminalCols.map(([name], i) => (
							<th key={i}>
								{name}
								{i === 0 && <small>/</small>}
							</th>
						))}
					</tr>
				</thead>
				<tbody>
					<tr>
						<td colSpan={11}>
							<i />
							余额: 268 702.01 USD&nbsp; 净值: 268 702.01&nbsp; 可用预付款: 268 702.01
						</td>
						<td>0.00</td>
					</tr>
				</tbody>
			</TerminalTable>
			<TerminalTabs>
				{terminalTabs.map(([name, count]) => (
					<button key={name}>
						{name}
						{count && <sub>{count}</sub>}
					</button>
				))}
			</TerminalTabs>
		</Terminal>
	);
}

function Status() {
	return (
		<StatusBar>
			<StatusCell><span>求帮助,请按F1键</span></StatusCell>
			<StatusCell $w={131}>Default</StatusCell>
			<StatusCell $w={122}>2026.03.04 22:00</StatusCell>
			<StatusCell $w={82}>O: 5137.79</StatusCell>
			<StatusCell $w={83}>H: 5146.62</StatusCell>
			<StatusCell $w={79}>L: 5123.65</StatusCell>
			<StatusCell $w={81}>C: 5079.31</StatusCell>
			<StatusCell $w={77} />
			<StatusCell $w={133}>
				<svg width="27" height="14" viewBox="0 0 27 14">
					{[0, 3, 6, 9, 12, 15, 18, 21, 24].map((x) => (
						<g key={x}>
							<path d={`M${x} 0h2v${11 - x / 3}h-2z`} fill="#5c8a1c" />
							<path d={`M${x} ${11 - x / 3}h2V14h-2z`} fill="#8c2410" />
						</g>
					))}
				</svg>
				820/46 kb
			</StatusCell>
		</StatusBar>
	);
}

const apps = [
	{
		name: "Edge",
		art: (
			<>
				<circle cx="10" cy="10" r="9" fill="#1c7cc4" />
				<path d="M2 7C5-1 18 0 19 9c0 3-4 4-7 3 2-4-3-7-10-5z" fill="#46cfa0" />
				<path d="M12 12c-2 3 2 6 5 4-3 4-10 3-10-3 0-3 2-4 4-4z" fill="#9fdcf4" />
			</>
		),
	},
	{
		name: "通达信",
		art: (
			<>
				<path d="M1 7l7-6 7 4v3h4v9l-12 2z" fill="#d7e224" stroke="#222" strokeWidth="1.5" />
				<path d="M8 9h10v7H8z" fill="#fff" stroke="#222" />
				<path d="M8 12.500h10M11.500 9v7M15 9v7" stroke="#222" />
			</>
		),
	},
	{
		name: "浏览器",
		art: (
			<>
				<circle cx="10" cy="10" r="9" fill="#2fb574" />
				<path d="M10 5c-4 3-4 7 0 10M10 5h2M10 15h2M8 10h4" stroke="#fff" strokeWidth="1.5" fill="none" />
			</>
		),
	},
	{
		name: "远程桌面",
		art: (
			<>
				<path d="M2 1h8l2 9H4z" fill="#1f2fc0" />
				<path d="M10 9h7l2 8h-8z" fill="#a8b4d0" />
				<path d="M3 12h7v2H3z" fill="#666" />
			</>
		),
	},
	{ name: "WPS", art: <path d="M0 4h7M3 4l3 11 4-9 3 9 5-11h-6" stroke="#e0382c" strokeWidth="2.8" fill="none" /> },
	{
		name: "360",
		art: (
			<path d="M16 13c-3 5-11 3-11-3 0-7 11-8 11 0H6M17 2c-4 0-14 6-14 15" stroke="#6cc82c" strokeWidth="2.4" fill="none" />
		),
	},
	{
		name: "EC",
		running: true,
		art: (
			<>
				<path d="M1 1h18v18H1z" fill="#d83c3c" />
				<text x="3" y="14" fontSize="11" fill="#fff">EC</text>
			</>
		),
	},
	{
		name: "MT4",
		running: true,
		art: (
			<>
				<path d="M1 1h18v18H1z" fill="#101050" />
				<path d="M3 14c5 2 12 0 13-5M9 5l2 6M5 10c3-3 7-1 10-4" stroke="#e8eef8" strokeWidth="1.8" fill="none" />
			</>
		),
	},
	{
		name: "记事",
		running: true,
		art: (
			<>
				<path d="M1 1h18v18H1z" fill="#e01f22" />
				<path d="M12 1l7 7V1zM12 11l3 3-5 5h2l7-5-3-5z" fill="#f4e8e8" />
			</>
		),
	},
	{
		name: "KVB",
		running: true,
		active: true,
		art: (
			<>
				<path d="M1 1h18v18H1z" fill="#f8dc10" />
				<path d="M3 10h14" stroke="#6a5a10" strokeWidth="1.5" />
			</>
		),
	},
	{
		name: "微信",
		running: true,
		art: (
			<>
				<rect x="1" y="1" width="18" height="18" rx="3" fill="#10d070" />
				<ellipse cx="8.5" cy="8.5" rx="4.5" ry="4" fill="#fff" />
				<ellipse cx="12.5" cy="12" rx="4" ry="3.4" fill="#fff" stroke="#10c46a" strokeWidth=".8" />
			</>
		),
	},
];

function TaskBar() {
	return (
		<Taskbar>
			<TaskIcons>
				<StartButton aria-label="开始">
					<svg width="18" height="18" viewBox="0 0 18 18">
						<path d="M0 2l8-1v7.500H0zM9 1l9-1v8.500H9zM0 9.500h8V17l-8-1zM9 9.500h9V18l-9-1z" fill="#111" />
					</svg>
				</StartButton>
				<button aria-label="搜索"><Magnifier size={20} strokeWidth={1.8} /></button>
				<TaskDivider />
				{apps.map(({ name, art, running, active }) => (
					<TaskButton key={name} aria-label={name} $running={running} $active={active}>
						<svg width="18" height="18" viewBox="0 0 20 20">{art}</svg>
					</TaskButton>
				))}
			</TaskIcons>
			<Tray>
				<Weather>
					<svg width="28" height="30" viewBox="0 0 28 30">
						<circle cx="8" cy="7" r="6" fill="#f6c83c" />
						<path d="M8 10h14l-1 19H9z" fill="#1cd0a8" />
						<path d="M17 9l2-6 7-2" stroke="#f08878" strokeWidth="2.5" fill="none" />
					</svg>
					喝口水
				</Weather>
				<ChevronUp size={16} />
				<VolumeX size={17} strokeWidth={1.5} />
				<span>中</span>
				<svg width="18" height="18" viewBox="0 0 20 20">
					<rect width="20" height="20" rx="3" fill="#e85426" />
					<path d="M15 5.500c-4-2-9-1-9 1.500s8 2 8 5-6 4-9 2" stroke="#fff" strokeWidth="2.6" fill="none" />
				</svg>
				<time>
					9:50
					<br />
					2026/3/14
				</time>
				<svg width="18" height="18" viewBox="0 0 18 18" fill="none">
					<path d="M1 1h16v13h-6l-2 3-2-3H1z" stroke="#222" strokeWidth="1.3" />
				</svg>
			</Tray>
		</Taskbar>
	);
}

const marks = [];
for (let row = 0; row < 4; row++) {
	for (let col = 0; col < 7; col++) marks.push([61 + col * 250, 178 + row * 249]);
}

export default function App() {
	return (
		<Desktop>
			<GlobalStyle />
			<TitleBar>
				<h1>951016685: KVBPrimeLimited-Live - KVB Prime Limited - [XAUUSD,H1]</h1>
				<WindowButtons>
					<button aria-label="最小化"><Minus size={14} strokeWidth={1.5} /></button>
					<button aria-label="还原">
						<svg width="12" height="12" viewBox="0 0 12 12" fill="none" stroke="#222">
							<path d="M.5 2.500h9v9h-9zM2.500 2.500v-2h9v9h-2" />
						</svg>
					</button>
					<button aria-label="关闭"><X size={15} strokeWidth={1.5} /></button>
				</WindowButtons>
			</TitleBar>
			<MenuBar>
				<ul>
					{menus.map((m) => (
						<li key={m}><button>{m}</button></li>
					))}
				</ul>
				<WindowButtons $small>
					<button aria-label="最小化图表"><Minus size={8} /></button>
					<button aria-label="还原图表">
						<svg width="8" height="8" viewBox="0 0 12 12" fill="none" stroke="#555" strokeWidth="1.5">
							<path d="M1 4h7v7H1zM4 4V1h7v7H8" />
						</svg>
					</button>
					<button aria-label="关闭图表"><X size={9} /></button>
				</WindowButtons>
			</MenuBar>
			<Tools />
			<Workspace>
				<Navigator />
				<MarketWatch />
				<Chart />
			</Workspace>
			<TerminalPanel />
			<Status />
			<TaskBar />
			<ImeBar>
				<button aria-label="搜狗">
					<svg width="20" height="20" viewBox="0 0 20 20" fill="none">
						<path d="M18 3C12 1 3 3 3.500 7c.5 3 13 2 13 5.500 0 4-9 5-14.500 3" stroke="#e86a20" strokeWidth="4" />
					</svg>
				</button>
				<button>中</button>
				<button>°,</button>
				<button aria-label="语音"><Mic size={19} /></button>
				<button aria-label="键盘">
					<svg width="19" height="18" viewBox="0 0 19 18" fill="none" stroke="#222" strokeWidth="1.6">
						<rect x="1" y="1" width="17" height="16" rx="1" />
						<path d="M5 6h9M5 9h9" strokeDasharray="2 1.5" />
						<path d="M5 13h9" />
					</svg>
				</button>
				<button aria-label="皮肤">
					<Shirt size={18} fill="#9a80f0" color="#b078e8" />
					<Dot />
				</button>
				<button>Ai</button>
			</ImeBar>
			<Watermark aria-hidden="true">
				{marks.map(([x, y]) => (
					<text
						key={`${x}-${y}`}
						transform={`translate(${x} ${y}) rotate(-34)`}
						fontFamily="Roboto, sans-serif"
						fontSize="38"
						fontWeight="500"
						fill="rgba(255,255,255,.12)"
						stroke="rgba(90,90,90,.35)"
						strokeWidth="1"
					>
						EAHub.cn
					</text>
				))}
			</Watermark>
		</Desktop>
	);
}
